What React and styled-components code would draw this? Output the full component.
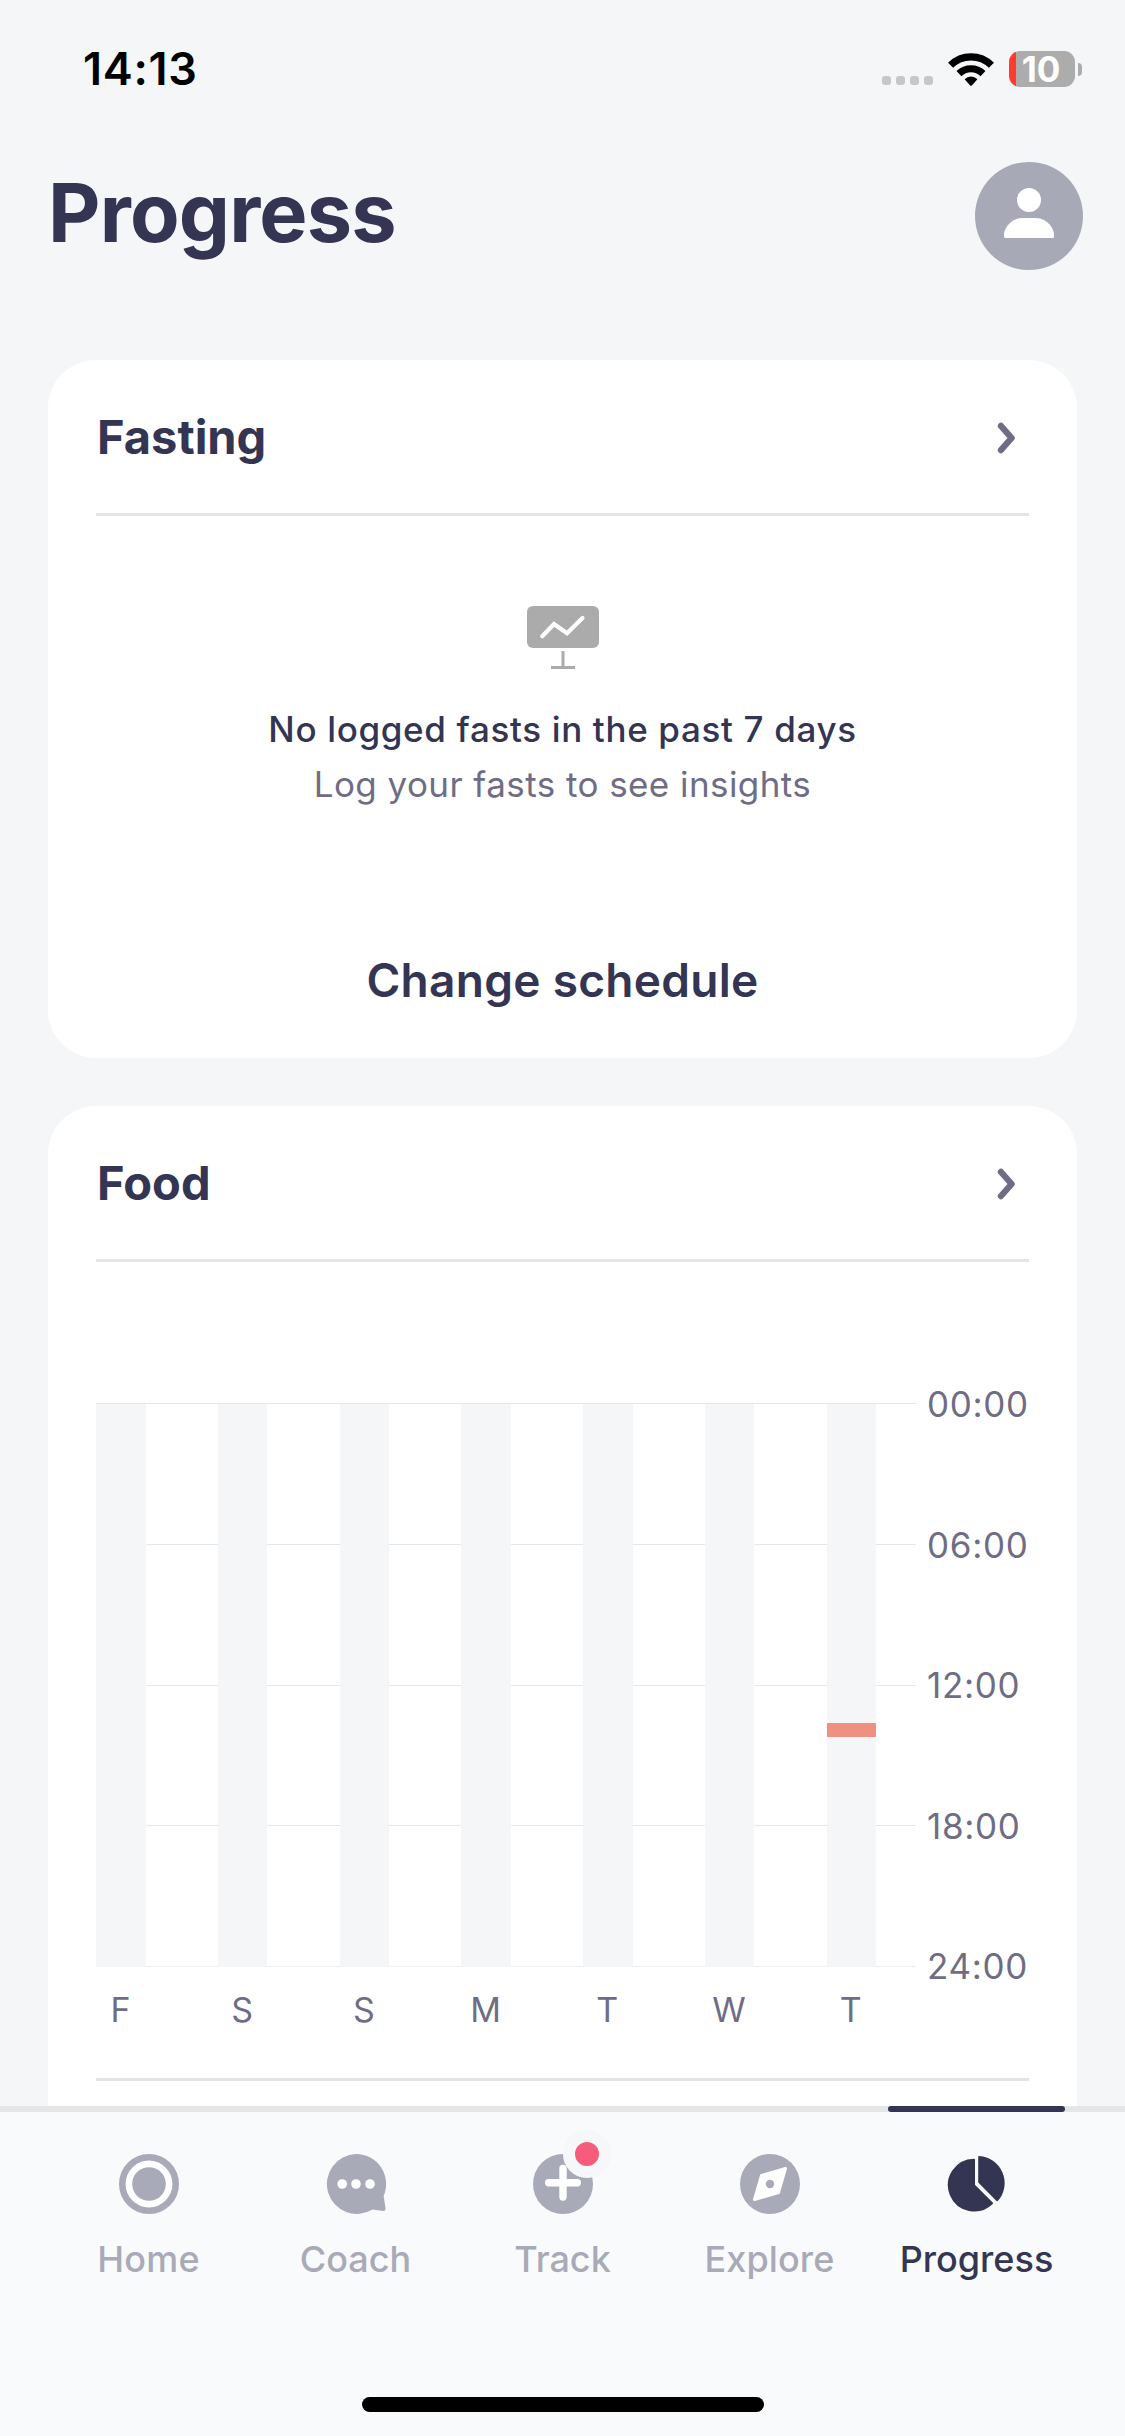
import React, { useState } from 'react';
import styled, { createGlobalStyle } from 'styled-components';

const COLOR_INK = "#333552";
const COLOR_MUTED = "#6f6d85";
const COLOR_INACTIVE = "#a9aab7";
const COLOR_LINE = "#e3e3ec";
const COLOR_PAGE = "#f4f6f8";
const COLOR_NAV = "#f9fafc";
const HOURS_IN_DAY = 24;

const GlobalStyle = createGlobalStyle`
    * { box-sizing: border-box; }
    body {
        margin: 0;
        background: ${COLOR_PAGE};
        font-family: Inter, "Liberation Sans", sans-serif;
        color: ${COLOR_INK};
    }
    button {
        padding: 0;
        border: 0;
        background: none;
        font: inherit;
        color: inherit;
    }
    svg { display: block; }
`;

const Screen = styled.div`
    display: flex;
    flex-direction: column;
    width: 1125px;
    height: 2436px;
    overflow: hidden;
`;

const StatusBar = styled.div`
    display: flex;
    justify-content: space-between;
    height: 138px;
    padding: 0 43px 0 83px;
    align-items: center;
`;

const Clock = styled.span`
    color: #000;
    font-size: 45px;
    font-weight: 600;
    line-height: 48px;
    letter-spacing: 0.7px;
`;

const StatusIcons = styled.div`
    display: flex;
    align-items: center;
`;

const SignalDots = styled.div`
    display: flex;
    gap: 5px;
    margin: 23px 15px 0 0;
`;

const SignalDot = styled.i`
    width: 9px;
    height: 9px;
    border-radius: 3px;
    background: #c6c7c9;
`;

const Battery = styled.div`
    display: flex;
    align-items: center;
    gap: 3px;
    margin-left: 15px;
`;

const BatteryBody = styled.div`
    width: 66px;
    height: 36px;
    padding-right: 2px;
    border-radius: 11px;
    background: linear-gradient(to right, #ff3b30 7px, #acacad 7px);
    color: #fff;
    font-size: 35px;
    font-weight: 700;
    line-height: 37px;
    text-align: center;
`;

const BatteryTip = styled.i`
    width: 4px;
    height: 13px;
    border-radius: 0 5px 5px 0;
    background: #acacad;
`;

const PageHeader = styled.header`
    display: flex;
    justify-content: space-between;
    height: 222px;
    padding: 24px 42px 0 48px;
`;

const PageTitle = styled.h1`
    margin: 0;
    font-size: 81px;
    font-weight: 700;
    line-height: 102px;
    letter-spacing: -0.8px;
`;

const Avatar = styled.button`
    display: flex;
    justify-content: center;
    width: 108px;
    height: 108px;
    padding-top: 26px;
    border-radius: 50%;
    background: #a8a9b7;
`;

const Content = styled.main`
    display: flex;
    flex-direction: column;
    flex: 1;
    gap: 48px;
    min-height: 0;
    padding: 0 48px;
    overflow: hidden;
`;

const Card = styled.section`
    flex: none;
    height: ${props => props.$height}px;
    padding: 0 48px;
    border-radius: 48px;
    background: #fff;
`;

const CardHeader = styled.div`
    display: flex;
    align-items: center;
    justify-content: space-between;
    height: 156px;
    padding: 0 12px 0 1px;
    border-bottom: 3px solid ${COLOR_LINE};
`;

const CardTitle = styled.h2`
    margin: 0;
    font-size: 47px;
    font-weight: 700;
    line-height: 56px;
`;

const ChevronWrap = styled.div`
    margin-top: 3px;
`;

const EmptyState = styled.div`
    display: flex;
    flex-direction: column;
    align-items: center;
    padding-top: 90px;
`;

const EmptyTitle = styled.p`
    margin: 33px 0 0;
    font-size: 35px;
    font-weight: 500;
    line-height: 55px;
    letter-spacing: 0.65px;
`;

const EmptyHint = styled.p`
    margin: 0;
    color: ${COLOR_MUTED};
    font-size: 35px;
    line-height: 55px;
    letter-spacing: 0.43px;
`;

const ScheduleButton = styled.button`
    display: block;
    width: 100%;
    margin-top: 140px;
    font-size: 46px;
    font-weight: 600;
    line-height: 56px;
    letter-spacing: 0.3px;
`;

const Chart = styled.div`
    display: grid;
    grid-template-columns: 820px 1fr;
    column-gap: 11px;
    margin-top: 141px;
`;

const Plot = styled.div`
    display: grid;
    height: 564px;
`;

const GridLines = styled.div`
    grid-area: 1 / 1;
    display: flex;
    flex-direction: column;
    border-bottom: 1px solid #eceef0;
`;

const GridBand = styled.div`
    flex: 1;
    border-top: 1px solid #e4e7e9;
`;

const Bars = styled.div`
    grid-area: 1 / 1;
    display: grid;
    grid-template-columns: repeat(7, 49.5px);
    column-gap: 72.3px;
    padding-top: 1px;
`;

const DayBar = styled.div`
    background: ${COLOR_PAGE};
`;

const Meal = styled.div`
    background: #f09080;
`;

const HourLabels = styled.div`
    display: flex;
    flex-direction: column;
    justify-content: space-between;
    height: 602px;
    margin: -19px 0;
    color: ${COLOR_MUTED};
    font-size: 35px;
    line-height: 40px;
    letter-spacing: 0.7px;
`;

const DayLabels = styled.div`
    display: grid;
    grid-template-columns: repeat(7, 49px);
    column-gap: 72.7px;
    padding: 23px 0 48px;
    color: ${COLOR_MUTED};
    font-size: 34px;
    line-height: 40px;
    text-align: center;
`;

const CardDivider = styled.div`
    height: 3px;
    background: ${COLOR_LINE};
`;

const TabBar = styled.nav`
    display: flex;
    flex-direction: column;
    flex: none;
    align-items: center;
    height: 330px;
    border-top: 6px solid #e5e6e8;
    background: ${COLOR_NAV};
`;

const Tabs = styled.div`
    display: grid;
    grid-template-columns: repeat(5, 207px);
    height: 291px;
    margin-top: -6px;
`;

const Tab = styled.button`
    display: flex;
    flex-direction: column;
    align-items: center;
    color: ${props => (props.$active ? COLOR_INK : COLOR_INACTIVE)};
`;

const TabMarker = styled.i`
    width: 177px;
    height: 6px;
    margin-bottom: 42px;
    border-radius: 3px;
    background: ${props => (props.$active ? COLOR_INK : "transparent")};
`;

const TabIcon = styled.div`
    position: relative;
    margin-left: 1px;
`;

const TabBadge = styled.i`
    position: absolute;
    top: -24px;
    left: 30px;
    width: 48px;
    height: 48px;
    border: 12px solid #f6f7f9;
    border-radius: 50%;
    background: #f55d7a;
`;

const TabLabel = styled.span`
    margin-top: 25px;
    font-size: 36px;
    font-weight: 500;
    line-height: 40px;
    letter-spacing: ${props => props.$tracking}px;
`;

const HomeIndicator = styled.div`
    width: 402px;
    height: 15px;
    border-radius: 8px;
    background: #000;
`;

const SvgWifi = () => (
    <svg width="46" height="33" viewBox="0 0 46 33">
        <g fill="none" stroke="#000" strokeWidth="7.2">
            <path d="M2.6 12.2A29 29 0 0 1 43.4 12.2" />
            <path d="M11 20.6A17.3 17.3 0 0 1 35 20.6" />
        </g>
        <path d="M16.6 26.2A9.2 9.2 0 0 1 29.4 26.2L23.8 32.4Q23 33.2 22.2 32.4Z" />
    </svg>
);

const SvgPerson = () => (
    <svg width="50" height="50" viewBox="0 0 50 50" fill="#fff">
        <circle cx="25" cy="12" r="12" />
        <path d="M0 47Q0 42 4 37Q10 30 18 30H32Q40 30 46 37Q50 42 50 47V48.5Q50 50 48.5 50H1.5Q0 50 0 48.5Z" />
    </svg>
);

const SvgChevron = () => (
    <svg width="20" height="32" viewBox="0 0 20 32">
        <path d="M4 4L14.6 16L4 28" fill="none" stroke={COLOR_MUTED} strokeWidth="6.4" strokeLinecap="round" strokeLinejoin="round" />
    </svg>
);

const SvgBoard = () => (
    <svg width="72" height="63" viewBox="0 0 72 63">
        <rect width="72" height="42" rx="6" fill="#ababab" />
        <path d="M15.3 30.3L27 18L40 27.3L55.5 12" fill="none" stroke="#fff" strokeWidth="4.2" strokeLinecap="round" />
        <path d="M34.5 45h3v15H48v3H24v-3h10.5z" fill="#ababab" />
    </svg>
);

const SvgHome = () => (
    <svg width="60" height="60" viewBox="0 0 60 60">
        <circle cx="30" cy="30" r="26.7" fill="#fff" stroke="currentColor" strokeWidth="6.6" />
        <circle cx="30" cy="30" r="16.8" fill="currentColor" />
    </svg>
);

const SvgCoach = () => (
    <svg width="60" height="60" viewBox="0 0 60 60">
        <path d="M30 0A30 30 0 0 1 57.6 42L59.5 54Q60 57.2 57 57L46.5 55.6A30 30 0 1 1 30 0Z" fill="currentColor" />
        <g fill="#fff">
            <circle cx="16.2" cy="30" r="4.8" />
            <circle cx="30" cy="30" r="4.8" />
            <circle cx="44" cy="30" r="4.8" />
        </g>
    </svg>
);

const SvgTrack = () => (
    <svg width="60" height="60" viewBox="0 0 60 60">
        <circle cx="30" cy="30" r="30" fill="currentColor" />
        <path d="M30 14.5V43M15.7 28.7H44.3" fill="none" stroke="#fff" strokeWidth="7.4" strokeLinecap="round" />
    </svg>
);

const SvgExplore = () => (
    <svg width="60" height="60" viewBox="0 0 60 60">
        <circle cx="30" cy="30" r="30" fill="currentColor" />
        <path d="M21.5 21.5L45.5 14.5L38.5 38.5L14.5 45.5Z" fill="#fff" stroke="#fff" strokeWidth="3" strokeLinejoin="round" />
        <circle cx="30" cy="30" r="4.2" fill="currentColor" />
    </svg>
);

const SvgProgress = () => (
    <svg width="60" height="60" viewBox="0 0 60 60">
        <g fill="currentColor" stroke="currentColor" strokeWidth="2" strokeLinejoin="round">
            <path d="M27 5.7A25.4 25.4 0 1 0 45 49.3L27 31.2Z" />
            <path d="M32.2 3.1A26 26 0 0 1 50.2 46.2L32.2 28Z" />
        </g>
    </svg>
);

const HOUR_MARKS = ["00:00", "06:00", "12:00", "18:00", "24:00"];

const WEEK = [
    { day: "F", meals: [] },
    { day: "S", meals: [] },
    { day: "S", meals: [] },
    { day: "M", meals: [] },
    { day: "T", meals: [] },
    { day: "W", meals: [] },
    { day: "T", meals: [{ start: 13.6, hours: 0.6 }] },
];

const TABS = [
    { name: "Home", Icon: SvgHome, tracking: 0.2 },
    { name: "Coach", Icon: SvgCoach, tracking: 0 },
    { name: "Track", Icon: SvgTrack, tracking: 0, badge: true },
    { name: "Explore", Icon: SvgExplore, tracking: 0.1 },
    { name: "Progress", Icon: SvgProgress, tracking: 0 },
];

function mealStyle(meal, plotHeight) {
    return {
        marginTop: Math.round(meal.start / HOURS_IN_DAY * plotHeight),
        height: Math.round(meal.hours / HOURS_IN_DAY * plotHeight),
    };
}

const FoodChart = ({ week }) => (
    <>
        <Chart>
            <Plot>
                <GridLines>
                    {HOUR_MARKS.slice(1).map(mark => <GridBand key={mark} />)}
                </GridLines>
                <Bars>
                    {week.map((entry, i) => (
                        <DayBar key={i}>
                            {entry.meals.map((meal, j) => <Meal key={j} style={mealStyle(meal, 563)} />)}
                        </DayBar>
                    ))}
                </Bars>
            </Plot>
            <HourLabels>
                {HOUR_MARKS.map(mark => <span key={mark}>{mark}</span>)}
            </HourLabels>
        </Chart>
        <DayLabels>
            {week.map((entry, i) => <span key={i}>{entry.day}</span>)}
        </DayLabels>
    </>
);

const App = () => {
    const [activeTab, setActiveTab] = useState("Progress");

    return (
        <Screen>
            <GlobalStyle />
            <StatusBar>
                <Clock>14:13</Clock>
                <StatusIcons>
                    <SignalDots>
                        <SignalDot /><SignalDot /><SignalDot /><SignalDot />
                    </SignalDots>
                    <SvgWifi />
                    <Battery>
                        <BatteryBody>10</BatteryBody>
                        <BatteryTip />
                    </Battery>
                </StatusIcons>
            </StatusBar>
            <PageHeader>
                <PageTitle>Progress</PageTitle>
                <Avatar><SvgPerson /></Avatar>
            </PageHeader>
            <Content>
                <Card $height={698}>
                    <CardHeader>
                        <CardTitle>Fasting</CardTitle>
                        <ChevronWrap><SvgChevron /></ChevronWrap>
                    </CardHeader>
                    <EmptyState>
                        <SvgBoard />
                        <EmptyTitle>No logged fasts in the past 7 days</EmptyTitle>
                        <EmptyHint>Log your fasts to see insights</EmptyHint>
                    </EmptyState>
                    <ScheduleButton>Change schedule</ScheduleButton>
                </Card>
                <Card $height={1100}>
                    <CardHeader>
                        <CardTitle>Food</CardTitle>
                        <ChevronWrap><SvgChevron /></ChevronWrap>
                    </CardHeader>
                    <FoodChart week={WEEK} />
                    <CardDivider />
                </Card>
            </Content>
            <TabBar>
                <Tabs>
                    {TABS.map(({ name, Icon, tracking, badge }) => (
                        <Tab key={name} $active={name === activeTab} onClick={() => setActiveTab(name)}>
                            <TabMarker $active={name === activeTab} />
                            <TabIcon>
                                <Icon />
                                {badge && <TabBadge />}
                            </TabIcon>
                            <TabLabel $tracking={tracking}>{name}</TabLabel>
                        </Tab>
                    ))}
                </Tabs>
                <HomeIndicator />
            </TabBar>
        </Screen>
    );
}

export default App;
